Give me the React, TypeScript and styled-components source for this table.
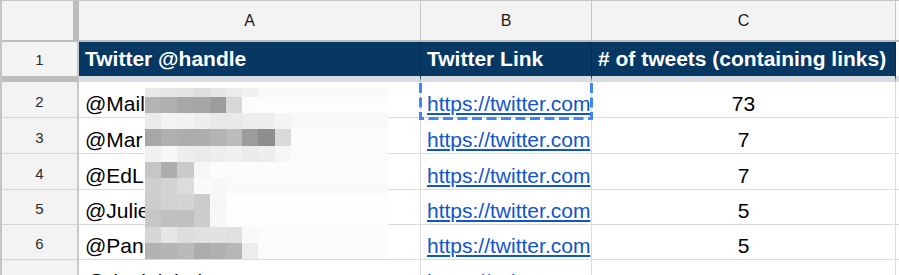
import React from "react";
import styled, { createGlobalStyle } from "styled-components";

const GlobalStyle = createGlobalStyle`
  *, *::before, *::after {
    box-sizing: border-box;
  }
  html, body {
    margin: 0;
    padding: 0;
    background: #fff;
  }
  body {
    font-family: "Liberation Sans", Arial, sans-serif;
    overflow: hidden;
  }
`;

const Frame = styled.div`
  position: relative;
  width: 899px;
  height: 275px;
  overflow: hidden;
`;

const Sheet = styled.div`
  display: grid;
  grid-template-columns: 77px 342px 171px 304px 1fr;
  grid-template-rows: 41px 40px 36px 36px 36px 35px 35px 36px;
  border-top: 1px solid #c4c4c4;
  border-left: 2px solid #c4c4c4;
`;

const Corner = styled.div`
  background: #f3f3f3;
  border-right: 6px solid #bdbdbd;
  border-bottom: 2px solid #bdbdbd;
`;

const ColHead = styled.div<{ $blank?: boolean }>`
  display: flex;
  align-items: center;
  justify-content: center;
  background: ${(p) => (p.$blank ? "#fafafa" : "#f3f3f3")};
  border-right: 1px solid #c6c6c6;
  border-bottom: 2px solid #bdbdbd;
  font-size: 16px;
  color: #1a1a1a;
`;

const RowHead = styled.div<{ $frozen?: boolean }>`
  display: flex;
  align-items: center;
  justify-content: center;
  padding-top: ${(p) => (p.$frozen ? 0 : 3)}px;
  background: #f3f3f3;
  border-right: 2px solid #c8c8c8;
  border-bottom: ${(p) => (p.$frozen ? "6px solid #bdbdbd" : "1px solid #d4d4d4")};
  font-size: 15px;
  color: #2a2a2a;
`;

const TitleCell = styled.div<{ $blank?: boolean }>`
  display: flex;
  align-items: center;
  padding: 0 2px 0 6px;
  background: ${(p) => (p.$blank ? "#fff" : "#073763")};
  border-right: 1px solid ${(p) => (p.$blank ? "#dcdcdc" : "#052c52")};
  border-bottom: 6px solid #d8dde4;
  color: #fff;
  font-size: 21px;
  font-weight: bold;
  white-space: nowrap;
  overflow: hidden;
`;

const DataCell = styled.div<{ $center?: boolean }>`
  display: flex;
  align-items: flex-end;
  justify-content: ${(p) => (p.$center ? "center" : "flex-start")};
  padding: 0 6px 1px;
  border-right: 1px solid #dcdcdc;
  border-bottom: 1px solid #dcdcdc;
  font-size: 21px;
  line-height: 24px;
  color: #000;
  white-space: nowrap;
  overflow: hidden;
`;

const Link = styled.a`
  color: #1155cc;
  text-decoration: underline;
`;

const Marquee = styled.svg`
  position: absolute;
  left: 418px;
  top: 82px;
`;

const Mosaic = styled.div`
  position: absolute;
  left: 145px;
  top: 88px;
  display: grid;
  grid-template-columns: repeat(15, 16.2px);
  grid-template-rows: 9px repeat(10, 16.2px);
`;

const Block = styled.div<{ $g: number }>`
  background: rgb(${(p) => `${p.$g}, ${p.$g}, ${p.$g}`});
`;

const rows = [
  { handle: "@Mail", count: 73 },
  { handle: "@Mar", count: 7 },
  { handle: "@EdL", count: 7 },
  { handle: "@Julie", count: 5 },
  { handle: "@Pan", count: 5 },
  { handle: "@daniel_holt", count: 5 },
];

// pixelated redaction over the handles, grey level per block
const mosaic = [
  [232, 230, 228, 222, 230, 236, 240, 248, 250, 250, 250, 250, 250, 250, 250],
  [180, 176, 168, 166, 156, 216, 252, 253, 253, 253, 253, 253, 253, 253, 253],
  [235, 244, 242, 238, 232, 233, 237, 238, 244, 248, 248, 248, 248, 248, 248],
  [168, 176, 172, 174, 180, 188, 156, 142, 218, 251, 251, 251, 251, 251, 251],
  [240, 247, 238, 235, 238, 240, 235, 238, 246, 251, 251, 251, 251, 251, 251],
  [198, 173, 202, 246, 252, 252, 252, 252, 252, 252, 252, 252, 252, 252, 252],
  [207, 212, 220, 250, 247, 250, 250, 250, 250, 250, 250, 250, 250, 250, 250],
  [205, 210, 212, 203, 246, 253, 253, 253, 253, 253, 253, 253, 253, 253, 253],
  [198, 192, 192, 205, 247, 253, 253, 253, 253, 253, 253, 253, 253, 253, 253],
  [214, 230, 221, 224, 226, 224, 248, 251, 251, 251, 251, 251, 251, 251, 251],
  [178, 180, 186, 172, 176, 182, 236, 251, 251, 251, 251, 251, 251, 251, 251],
];

const App = () => {
  return (
    <Frame>
      <GlobalStyle />
      <Sheet>
        <Corner />
        <ColHead>A</ColHead>
        <ColHead>B</ColHead>
        <ColHead>C</ColHead>
        <ColHead $blank />

        <RowHead $frozen>1</RowHead>
        <TitleCell>Twitter @handle</TitleCell>
        <TitleCell>Twitter Link</TitleCell>
        <TitleCell># of tweets (containing links)</TitleCell>
        <TitleCell $blank />

        {rows.map((r, i) => (
          <React.Fragment key={i}>
            <RowHead>{i + 2}</RowHead>
            <DataCell>{r.handle}</DataCell>
            <DataCell>
              <Link href="#">https://twitter.com</Link>
            </DataCell>
            <DataCell $center>{r.count}</DataCell>
            <DataCell />
          </React.Fragment>
        ))}
      </Sheet>

      <Mosaic>
        {mosaic.map((line, y) =>
          line.map((g, x) => <Block key={`${y}-${x}`} $g={g} />)
        )}
      </Mosaic>

      <Marquee width="177" height="40" viewBox="0 0 177 40">
        <path
          d="M2.5 1 V36.5 H173.5 V1"
          fill="none"
          stroke="#4285f4"
          strokeWidth="3"
          strokeDasharray="10 4.5"
        />
      </Marquee>
    </Frame>
  );
};

export default App;
